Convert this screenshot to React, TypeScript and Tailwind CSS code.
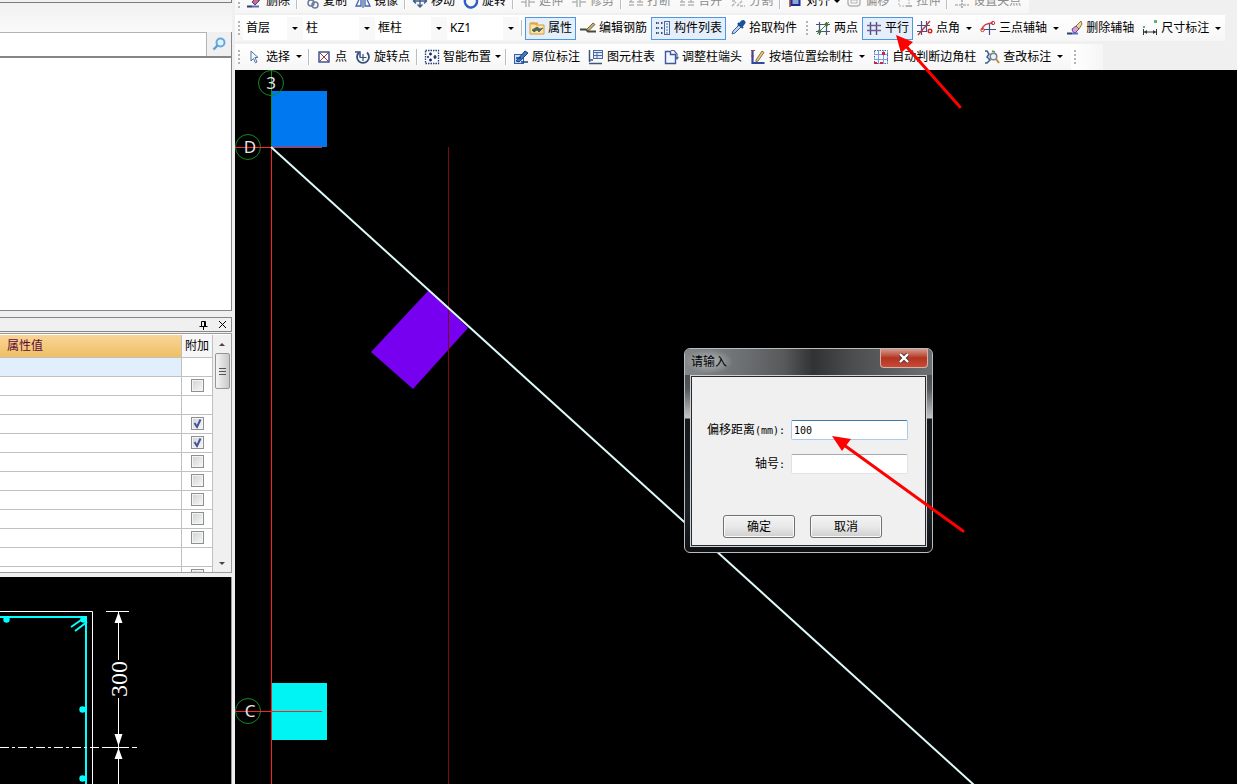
import type { ReactNode } from 'react';

const navy = '#2c3e6b';
const blue = '#3d63b5';
const gray = '#b5b5b5';

function Svg({ children }: { children: ReactNode }) {
  return (
    <svg width="16" height="16" viewBox="0 0 16 16" fill="none" className="shrink-0" aria-hidden="true">
      {children}
    </svg>
  );
}

const icons: Record<string, ReactNode> = {
  erase: (
    <Svg>
      <path d="M0 13.5h5" stroke={navy} strokeWidth="2" />
      <path d="M5 9l4-4 3 3-4 4z" fill="#c86a9c" stroke="#4b3f77" />
      <path d="M9 5l4-4 2 2-3 5z" fill="#e8c86a" stroke="#6b5b3a" />
      <path d="M5 13.5h7" stroke="#5a6fb0" strokeWidth="2" />
    </Svg>
  ),
  copy: (
    <Svg>
      <circle cx="7" cy="10" r="3" stroke="#6d7b99" strokeWidth="1.5" />
      <circle cx="11" cy="12" r="3" stroke="#6d7b99" strokeWidth="1.5" />
      <path d="M5 2v6" stroke="#6d7b99" />
    </Svg>
  ),
  mirror: (
    <Svg>
      <path d="M6 2v11H1zM10 2v11h5z" stroke={blue} strokeWidth="1.3" />
      <path d="M8 1v14" stroke={navy} />
    </Svg>
  ),
  move: (
    <Svg>
      <path d="M8 1v13M1 8h14M5.500 11.500L8 14l2.500-2.500M4 5.500L1.500 8 4 10.500M12 5.500L14.500 8 12 10.500" stroke="#3f5c8a" strokeWidth="1.4" />
    </Svg>
  ),
  rotate: (
    <Svg>
      <path d="M3 5a6 6 0 1 0 9-1" stroke="#2f5fc4" strokeWidth="2.600" />
    </Svg>
  ),
  grayBreak: (
    <Svg>
      <path d="M1 9h5M9 9h6M1 12h5M9 12h6M3 5v4M12 5v4" stroke={gray} strokeWidth="1.500" />
    </Svg>
  ),
  grayTrim: (
    <Svg>
      <path d="M1 9h5M9 9h6M6 3v11M9 3v11" stroke={gray} strokeWidth="1.500" />
    </Svg>
  ),
  graySplit: (
    <Svg>
      <path d="M2 13l4-4M7 13l5-5M2 8h3M10 13h5" stroke={gray} strokeWidth="1.500" strokeDasharray="3 1" />
    </Svg>
  ),
  align: (
    <Svg>
      <path d="M3 1v13" stroke="#a33" strokeWidth="1.500" />
      <rect x="4.500" y="6" width="8" height="6" fill="#8fa6dc" stroke="#1c2f86" strokeWidth="2" />
    </Svg>
  ),
  offset: (
    <Svg>
      <rect x="2" y="4" width="12" height="9" rx="3" stroke={gray} strokeWidth="1.500" />
      <rect x="5" y="7" width="6" height="3" stroke={gray} />
    </Svg>
  ),
  stretch: (
    <Svg>
      <rect x="2" y="4" width="10" height="9" stroke={gray} strokeDasharray="2 1" />
      <path d="M9 13h6" stroke={gray} strokeWidth="2" />
    </Svg>
  ),
  grip: (
    <Svg>
      <path d="M1 12h14" stroke={gray} strokeDasharray="3 1" strokeWidth="1.500" />
      <path d="M8 7v8" stroke={gray} strokeWidth="2" strokeDasharray="2 1" />
    </Svg>
  ),
  property: (
    <Svg>
      <path d="M1 3h5l1 2h8v9H1z" fill="#fbe3a0" stroke="#d29a3a" />
      <path d="M2 3.500h7" stroke="#e8a33c" strokeWidth="2" />
      <path d="M3 10l5-3 3 2 3-1-4 4-2-2-3 2z" fill="#4a6a55" stroke="#3a4a5a" strokeWidth=".6" />
    </Svg>
  ),
  rebar: (
    <Svg>
      <path d="M0 9.500h6l2 2h8" stroke="#3f4f3f" strokeWidth="1.800" />
      <path d="M6 10l7-7 2 1.500-6 6z" fill="#c9a86a" stroke="#5a4a30" strokeWidth=".8" />
    </Svg>
  ),
  list: (
    <Svg>
      <path d="M1 3h3M6 3h2M1 8h3M6 8h2M1 13h3M6 13h2" stroke="#39506f" strokeWidth="2" strokeDasharray="1.500 .7" />
      <rect x="9.500" y="1.500" width="5" height="13" fill="#eaf1fb" stroke="#4a6aa5" />
      <path d="M11 4h2M11 7h2M11 10h2M11 13h2" stroke="#4a6aa5" />
    </Svg>
  ),
  pick: (
    <Svg>
      <path d="M2 14l1-3 6-6 2 2-6 6z" fill="#bcd4f4" stroke="#3c5f9e" />
      <path d="M8 3l5 5M9 5l3-3.500q2-1 2.500 1L12 6z" fill="#1f5fae" stroke="#1c4f94" strokeWidth="2.200" />
    </Svg>
  ),
  twoPoint: (
    <Svg>
      <path d="M1 4.500h14M1 11.500h14M4.500 2v13M11.500 2v13" stroke="#4a5578" strokeWidth="1.200" />
      <path d="M2 14L14 2" stroke="#3a8a3a" />
      <circle cx="4.500" cy="11.500" r="1.900" fill="#3d7a44" />
      <circle cx="11.500" cy="4.500" r="1.900" fill="#3d7a44" />
    </Svg>
  ),
  parallel: (
    <Svg>
      <path d="M4.500 2v13M10.500 2v13" stroke="#46508a" strokeWidth="1.400" />
      <path d="M1 5.500h14M1 10.500h14" stroke="#7a5a8c" strokeWidth="1.400" />
    </Svg>
  ),
  pointAngle: (
    <Svg>
      <path d="M0 5.500h13M0 11.500h9M4.500 1v14M9.500 1v11" stroke="#46508a" strokeWidth="1.200" />
      <path d="M1 15L13 1" stroke="#b33" strokeWidth="1.300" />
      <circle cx="13" cy="11" r="1.800" stroke="#d22" strokeWidth="1.400" />
    </Svg>
  ),
  threePoint: (
    <Svg>
      <path d="M2 10Q3 3 13 3" stroke="#c44" strokeWidth="1.400" />
      <path d="M4 9.500h12M9.500 4v11" stroke="#46508a" strokeWidth="1.200" />
      <circle cx="13" cy="3" r="1.700" stroke="#c33" />
      <circle cx="2.500" cy="10" r="1.700" stroke="#c33" />
    </Svg>
  ),
  eraser: (
    <Svg>
      <path d="M0 13.500h5" stroke={navy} strokeWidth="2" />
      <path d="M5 13.500h6" stroke="#4d73c9" strokeWidth="2" />
      <path d="M5 9l4-3 3 3-4 4q-3-1-3-4z" fill="#dfa0d0" stroke="#5a4a94" />
      <path d="M9 6l5-5 1 3-3 5z" fill="#f0d68a" stroke="#6b5b3a" strokeWidth=".8" />
    </Svg>
  ),
  dimension: (
    <Svg>
      <rect x="1" y="6" width="2" height="2" fill="#5fb56a" />
      <rect x="12" y="0" width="3" height="3" fill="#5fb56a" />
      <path d="M1.500 9v6M14.500 9v6M2 12h12" stroke="#333" />
      <path d="M2 12l3-2v4zM14 12l-3-2v4z" fill="#333" />
    </Svg>
  ),
  pointer: (
    <Svg>
      <path d="M4 2l7 6.500H8l2 4.500-1.600.8L6.500 9.500 4 12z" fill="#f4f8ff" stroke="#53719e" />
    </Svg>
  ),
  point: (
    <Svg>
      <rect x="3" y="3" width="10" height="10" fill="#fff" stroke="#273a7c" strokeWidth="1.300" />
      <path d="M4 4l8 8M12 4l-8 8" stroke="#8a3a5c" />
      <rect x="7" y="7" width="2" height="2" fill="#c22" />
    </Svg>
  ),
  rotatePoint: (
    <Svg>
      <path d="M4 3.500a6 6 0 1 0 8 0" stroke="#33507c" strokeWidth="1.800" />
      <path d="M0 3h5v5" stroke="#33507c" strokeWidth="1.500" />
      <path d="M8 5v7M4.500 8.500h7" stroke="#33507c" strokeWidth="1.200" />
    </Svg>
  ),
  smart: (
    <Svg>
      <rect x="1.500" y="1.500" width="13" height="13" fill="#f6f9ff" stroke="#273f70" strokeWidth="1.300" strokeDasharray="1.500 1" />
      <path d="M6.500 3.500v3M5 5h3M6.500 9.500v3M5 11h3M11 6v4M9.500 8h3M3 8h2" stroke="#1c2c50" strokeWidth="1.300" />
    </Svg>
  ),
  origin: (
    <Svg>
      <rect x="1.500" y="5.500" width="9" height="9" fill="#cfe0f8" stroke="#2f5fae" />
      <path d="M3 12l9-10 3 2-9 9z" fill="#3f78c4" stroke="#1d4078" />
      <path d="M3 9h5M8 13h7" stroke="#1d4078" strokeWidth="1.400" />
    </Svg>
  ),
  columnTable: (
    <Svg>
      <path d="M1.500 1v12M1 14.500h13M1 11h4" stroke="#3d5878" strokeWidth="1.500" />
      <rect x="5.500" y="1.500" width="9" height="8" fill="#e4ecfa" stroke="#4a68a8" />
      <path d="M5 3.500h10M9 4v5M5 6.500h9" stroke="#4a68a8" />
    </Svg>
  ),
  columnEnd: (
    <Svg>
      <path d="M2.500 2.500h5v3h5v9h-10z" fill="#f2f6ff" stroke="#40589c" strokeWidth="1.400" />
      <path d="M8 1.500h3l3 3.500v5M12.500 8l1.500 2 1.500-2" stroke="#4c62a4" strokeWidth="1.200" />
    </Svg>
  ),
  wall: (
    <Svg>
      <path d="M2.500 1v13h12" stroke="#2e4aa0" strokeWidth="2.200" />
      <path d="M1 1.500h4M1 7h3" stroke="#b33" />
      <path d="M6 11l6-9 2 1.500L8 12l-2 1z" fill="#f0c878" stroke="#6b5030" strokeWidth=".8" />
    </Svg>
  ),
  corner: (
    <Svg>
      <rect x="1.500" y="1.500" width="13" height="13" fill="#f4f8ff" stroke="#3a5aa8" strokeDasharray="1.500 1" />
      <path d="M5.500 1v14M10.500 1v14M1 5.500h14M1 10.500h14" stroke="#7f9cd8" />
      <path d="M9 3h3v3H9zM1 13h3v2H1zM7 13h3v2H7z" fill="#d2233a" />
    </Svg>
  ),
  inspect: (
    <Svg>
      <path d="M1 2h2l2 3-2 3 3 3-3 3H1" stroke="#3d5f94" strokeWidth="1.500" />
      <circle cx="9.500" cy="7.500" r="3.300" fill="#e7f2ff" stroke="#7a7f88" strokeWidth="1.500" />
      <path d="M12 10l3 4" stroke="#c48a3a" strokeWidth="2" />
      <path d="M8 2l3 1" stroke="#4c9a4c" strokeWidth="1.500" />
    </Svg>
  ),
};

function Caret() {
  return <span className="block h-0 w-0 border-x-[3px] border-t-[3px] border-x-transparent border-t-black" />;
}

function Grip() {
  return (
    <span className="flex w-2 shrink-0 flex-col items-center gap-0.5">
      {[0, 1, 2, 3].map((i) => (
        <span key={i} className="h-0.5 w-0.5 bg-[#b4b4b4]" />
      ))}
    </span>
  );
}

function Separator() {
  return <span className="mx-[2px] box-content h-4 w-px shrink-0 border-r border-white bg-[#b8bcc4]" />;
}

type ToolProps = {
  icon: string;
  label: string;
  active?: boolean;
  disabled?: boolean;
  caret?: 'tight' | 'wide';
};

function Tool({ icon, label, active, disabled, caret }: ToolProps) {
  return (
    <button
      type="button"
      disabled={disabled}
      className={`flex h-[23px] shrink-0 items-center whitespace-nowrap ${
        active ? 'bg-[#e4effb] shadow-[inset_0_0_0_1px_#4a98e4]' : ''
      } ${disabled ? 'text-[#8c8c8c]' : 'text-black'}`}
    >
      <span className="flex items-center gap-[3px] px-1">
        {icons[icon]}
        {label}
      </span>
      {caret && (
        <span className={`flex items-center ${caret === 'wide' ? 'w-3 pl-0.5' : 'w-2'}`}>
          <Caret />
        </span>
      )}
    </button>
  );
}

function Picker({ name, value, className }: { name: string; value: string; className: string }) {
  return (
    <label className={`relative flex h-[23px] shrink-0 items-center ${className}`}>
      <select aria-label={name} className="h-full w-full appearance-none bg-white pl-[3px] text-xs outline-none">
        <option>{value}</option>
      </select>
      <span className="pointer-events-none absolute inset-y-0 right-0 flex items-center bg-[#f8f8f8] px-[5px]">
        <Caret />
      </span>
    </label>
  );
}

function Toolbars() {
  return (
    <header className="flex flex-col bg-[#f0f0f0]">
      <div className="flex h-[13px] items-end overflow-hidden">
        <div className="flex h-6 items-center bg-gradient-to-b from-[#fdfdfd] to-[#f6f6f6] pr-1">
          <Grip />
          <Tool icon="erase" label="删除" />
          <Separator />
          <Tool icon="copy" label="复制" />
          <Tool icon="mirror" label="镜像" />
          <Separator />
          <Tool icon="move" label="移动" />
          <Tool icon="rotate" label="旋转" />
          <Separator />
          <Tool icon="grayTrim" label="延伸" disabled />
          <Tool icon="grayTrim" label="修剪" disabled />
          <Separator />
          <Tool icon="grayBreak" label="打断" disabled />
          <Tool icon="grayBreak" label="合并" disabled />
          <Tool icon="graySplit" label="分割" disabled />
          <Separator />
          <Tool icon="align" label="对齐" caret="tight" />
          <Tool icon="offset" label="偏移" disabled />
          <Tool icon="stretch" label="拉伸" disabled />
          <Separator />
          <Tool icon="grip" label="设置夹点" disabled />
        </div>
      </div>
      <div className="flex h-[30px] items-center">
        <div className="flex h-[26px] items-center bg-gradient-to-b from-white to-[#f6f6f6] pr-0.5">
          <Grip />
          <Picker name="楼层" value="首层" className="w-15" />
          <Picker name="构件类型" value="柱" className="w-18" />
          <Picker name="类别" value="框柱" className="w-18" />
          <Picker name="构件" value="KZ1" className="w-18" />
          <Separator />
          <Tool icon="property" label="属性" active />
          <Tool icon="rebar" label="编辑钢筋" />
          <Tool icon="list" label="构件列表" active />
          <Tool icon="pick" label="拾取构件" />
        </div>
        <div className="flex h-[26px] items-center bg-gradient-to-b from-white to-[#f6f6f6]">
          <Grip />
          <Tool icon="twoPoint" label="两点" />
          <Tool icon="parallel" label="平行" active />
          <Tool icon="pointAngle" label="点角" caret="wide" />
          <Tool icon="threePoint" label="三点辅轴" caret="wide" />
          <Tool icon="eraser" label="删除辅轴" />
          <Tool icon="dimension" label="尺寸标注" caret="wide" />
        </div>
      </div>
      <div className="flex h-[27px] items-center">
        <div className="flex h-[26px] items-center bg-gradient-to-b from-white to-[#f6f6f6] pr-1">
          <Grip />
          <Tool icon="pointer" label="选择" caret="wide" />
          <Separator />
          <Tool icon="point" label="点" />
          <Tool icon="rotatePoint" label="旋转点" />
          <Separator />
          <Tool icon="smart" label="智能布置" caret="tight" />
          <Separator />
          <Tool icon="origin" label="原位标注" />
          <Tool icon="columnTable" label="图元柱表" />
          <Tool icon="columnEnd" label="调整柱端头" />
          <Tool icon="wall" label="按墙位置绘制柱" caret="wide" />
          <Tool icon="corner" label="自动判断边角柱" />
          <Tool icon="inspect" label="查改标注" caret="wide" />
        </div>
        <div className="flex h-[26px] w-8 items-center bg-gradient-to-r from-white to-[#f6f6f6]">
          <Grip />
        </div>
      </div>
    </header>
  );
}

// null = the row has no "附加" box
const rows: (boolean | null)[] = [null, false, null, true, true, false, false, false, false, false, null, false];

function PropertyTable() {
  return (
    <div className="flex h-[240px] overflow-hidden border-y border-r border-[#9a9a9a] bg-white pt-px">
      <table className="min-w-0 flex-1 table-fixed border-collapse self-start">
        <colgroup>
          <col />
          <col className="w-[31px]" />
        </colgroup>
        <thead>
          <tr className="h-[22px]">
            <th className="border-r border-b border-[#c0c0c0] bg-gradient-to-b from-[#f8d597] to-[#f0bf62] p-0 pl-[7px] text-left font-normal text-[#5c0a3c]">
              属性值
            </th>
            <th className="border-r border-b border-[#c0c0c0] bg-[#f7f7f7] p-0 font-normal whitespace-nowrap">附加</th>
          </tr>
        </thead>
        <tbody>
          {rows.map((checked, i) => (
            <tr key={i} className="h-[19px]">
              <td className={`border-r border-b border-[#c0c0c0] p-0 ${i === 0 ? 'bg-[#e1effd]' : ''}`} />
              <td className="border-r border-b border-[#c0c0c0] p-0">
                {checked !== null && <Tick checked={checked} label={`附加 ${i + 1}`} />}
              </td>
            </tr>
          ))}
        </tbody>
      </table>
      <div className="flex w-[18px] flex-col items-center bg-[#f0f0f0]">
        <button type="button" aria-label="上" className="flex h-[18px] w-full items-center justify-center">
          <span className="border-x-[3px] border-b-[3px] border-x-transparent border-b-[#444]" />
        </button>
        <div className="flex h-9 w-[15px] flex-col items-center justify-center gap-0.5 rounded-xs border border-[#959595] bg-gradient-to-r from-[#f5f5f5] to-[#c9c9c9]">
          <span className="h-px w-[7px] bg-[#555]" />
          <span className="h-px w-[7px] bg-[#555]" />
          <span className="h-px w-[7px] bg-[#555]" />
        </div>
        <button type="button" aria-label="下" className="mt-auto flex h-[18px] w-full items-center justify-center">
          <span className="border-x-[3px] border-t-[3px] border-x-transparent border-t-[#444]" />
        </button>
      </div>
    </div>
  );
}

function Tick({ checked, label }: { checked: boolean; label: string }) {
  return (
    <span className="relative mx-auto flex h-[13px] w-[13px]">
      <input
        type="checkbox"
        aria-label={label}
        defaultChecked={checked}
        className="peer h-[13px] w-[13px] appearance-none border border-[#8e8f8f] bg-gradient-to-br from-[#cfd1d4] to-[#f8f8f8] shadow-[inset_0_0_0_1px_#f4f4f4]"
      />
      <svg
        viewBox="0 0 13 13"
        fill="none"
        className="pointer-events-none absolute inset-0 hidden peer-checked:block"
        aria-hidden="true"
      >
        <path d="M3.500 6l2.500 4 3.500-7.500" stroke="#41549c" strokeWidth="2" />
      </svg>
    </span>
  );
}

function SectionPreview() {
  return (
    <svg className="h-full w-full" aria-label="截面">
      <g transform="translate(0 -577)" fill="none">
        <path d="M0 611.5H92.500V1200" stroke="#fff" />
        <path d="M0 617H86V1200" stroke="#00ffff" strokeWidth="2" />
        <path d="M71 627l13-9M75 631l12-9" stroke="#00ffff" strokeWidth="2" />
        <g fill="#00ffff">
          <circle cx="6.500" cy="619.500" r="3.200" />
          <circle cx="83.500" cy="619.500" r="3.200" />
          <circle cx="82.500" cy="709.500" r="3.200" />
          <circle cx="82.500" cy="778.500" r="3.200" />
        </g>
        <path d="M0 747.500H106" stroke="#fff" strokeDasharray="9 3 3 3" />
        <path d="M102 747.500H129M132 747.500h5M106 611.500h23M118.500 612V660M118.500 698V1200" stroke="#fff" />
        <path d="M118.500 612l-4 11h8zM118.500 746l-4-12h8zM118.500 748l-4 11h8z" fill="#fff" />
        <text
          transform="translate(127 697) rotate(-90)"
          fill="#fff"
          fontSize="24"
          fontFamily="'Liberation Serif', serif"
        >
          300
        </text>
      </g>
    </svg>
  );
}

function Sidebar() {
  return (
    <aside className="flex w-[232px] shrink-0 flex-col bg-[#f0f0f0]">
      <div className="h-[3px] shrink-0 border-r border-b border-[#7c7c7c]" />
      <div className="h-[29px] shrink-0 bg-gradient-to-b from-[#f1f1f1] to-[#fafafa]" />
      <div className="flex h-[26px] shrink-0 border-r border-b-2 border-[#85858a]">
        <input
          type="text"
          aria-label="搜索"
          className="min-w-0 flex-1 border-t border-r border-[#b4b4b4] bg-white px-1 outline-none"
        />
        <button type="button" aria-label="查找" className="flex w-6 items-center justify-center">
          <svg width="14" height="14" viewBox="0 0 14 14" fill="none" aria-hidden="true">
            <circle cx="8.500" cy="5.500" r="4" fill="#dff3fd" stroke="#62a9dc" strokeWidth="2" />
            <path d="M5.500 8.500L1.500 12.500" stroke="#5a9fd6" strokeWidth="2.400" />
          </svg>
        </button>
      </div>
      <div className="h-[253px] shrink-0 border-r border-b border-[#85858a] bg-white" />
      <div className="mt-[6px] mb-px flex h-[15px] shrink-0 items-center justify-end gap-2.5 border border-l-0 border-[#85858a] pr-1">
        <svg width="9" height="10" viewBox="0 0 9 10" fill="none" aria-hidden="true">
          <path d="M2.500 6V1.500h4V6M0.500 6.500h8M4.500 7v3M5.500 1v5" stroke="#000" />
        </svg>
        <button type="button" aria-label="关闭">
          <svg width="9" height="9" viewBox="0 0 9 9" aria-hidden="true">
            <path d="M1 1l7 7M8 1L1 8" stroke="#000" />
          </svg>
        </button>
      </div>
      <PropertyTable />
      <div className="mt-[4px] min-h-0 flex-1 border-r border-[#9a9a9a] bg-black">
        <SectionPreview />
      </div>
    </aside>
  );
}

function Drawing() {
  return (
    <svg className="absolute inset-0 h-full w-full" aria-label="绘图区">
      <g transform="translate(-235 -70)" fill="none">
        <path d="M272 91h55v56h-55z" fill="#0078f0" />
        <path d="M272 683h55v57h-55z" fill="#00f4f4" />
        <path d="M429 290l39 38-55 61-42-37z" fill="#7800f0" />
        <path d="M448.500 147V1600" stroke="#7a0c10" />
        <g stroke="#128a22">
          <circle cx="271" cy="83" r="12.500" />
          <circle cx="248" cy="147" r="12.500" />
          <circle cx="248" cy="711" r="12.500" />
          <path d="M271.500 70V147" />
        </g>
        <path d="M235 147.500H322" stroke="#ff2020" />
        <path d="M235 711.500H322" stroke="#ff2020" />
        <path d="M271.500 148V1600" stroke="#ff2020" />
        <path d="M271 147L1171 963.700" stroke="#dcfafa" strokeWidth="2" />
        <g fill="#e4e4e4" fontSize="17" textAnchor="middle" fontFamily="'Noto Sans', sans-serif">
          <text x="271" y="89">3</text>
          <text x="250" y="153">D</text>
          <text x="250" y="717">C</text>
        </g>
      </g>
    </svg>
  );
}

function InputDialog() {
  const field =
    'h-5 w-full rounded-xs border bg-white px-[2px] font-["DejaVu_Sans_Mono",monospace] text-[10px] outline-none';
  const button =
    'h-[23px] w-18 rounded-[3px] border border-[#707070] bg-gradient-to-b from-[#f3f3f3] via-[#e9e9e9] to-[#cfcfcf] shadow-[inset_0_0_0_1px_#fafafa]';
  return (
    <form
      role="dialog"
      aria-labelledby="dialog-title"
      className="absolute top-[278px] left-[449px] w-[249px] rounded-md border border-[#b9bdc0] bg-[linear-gradient(#5f6367_0,#4a4d50_27px,#55585b_40px,#c4c6c8_69px,#15181b_70px,#1d2328_160px,#0e1114)] px-[5px] pb-[5px]"
    >
      <div className="-mx-[5px] flex h-[26px] items-start justify-between rounded-t-md bg-[linear-gradient(90deg,#83878a,#6b6e70_25%,#57595a_40%,#303233_52%,#4b4d4e_68%,#6d7072)] pr-1">
        <h2
          id="dialog-title"
          className="rounded-full bg-[radial-gradient(closest-side,#b5b8ba,transparent)] px-[6px] leading-[25px] text-black"
        >
          请输入
        </h2>
        <button
          type="button"
          aria-label="关闭"
          className="flex h-[19px] w-[48px] items-center justify-center rounded-b-[4px] border border-t-0 border-[#d8b0a8] bg-gradient-to-b from-[#d9998c] via-[#b23320] via-50% to-[#c84a36]"
        >
          <svg width="12" height="10" viewBox="0 0 12 10" aria-hidden="true">
            <path d="M2 1l8 8M10 1L2 9" stroke="#4f3436" strokeWidth="4" />
            <path d="M2 1l8 8M10 1L2 9" stroke="#fff" strokeWidth="2.400" />
          </svg>
        </button>
      </div>
      <div className="border border-[#cfd2d4] bg-[#f0f0f0] pt-[44px] pr-[18px] pb-[8px] shadow-[inset_0_0_0_1px_#2a2a2a]">
        <div className="grid grid-cols-[94px_1fr] items-center gap-x-[6px] gap-y-[14px]">
          <label htmlFor="distance" className="text-right whitespace-nowrap">
            偏移距离<span className="font-['DejaVu_Sans_Mono',monospace] text-[10px]">(mm):</span>
          </label>
          <input id="distance" type="text" defaultValue="100" className={`${field} border-[#a9cbe9] border-t-[#3d7bad]`} />
          <label htmlFor="axis" className="text-right whitespace-nowrap">
            轴号<span className="font-['DejaVu_Sans_Mono',monospace] text-[10px]">:</span>
          </label>
          <input id="axis" type="text" className={`${field} border-[#dfe3e8] border-t-[#a4a8b0]`} />
        </div>
        <div className="mt-[41px] flex gap-[15px] pl-8">
          <button type="submit" className={button}>
            确定
          </button>
          <button type="button" className={button}>
            取消
          </button>
        </div>
      </div>
    </form>
  );
}

function Arrows() {
  return (
    <svg className="pointer-events-none absolute inset-0 h-full w-full" aria-hidden="true">
      <g stroke="#ff0000" strokeWidth="3" strokeLinecap="round">
        <path d="M905 45L960 107" />
        <path d="M844 445L963 531" />
      </g>
      <path d="M896 35l5 18 12-11zM832 436l10 15 9-12z" fill="#ff0000" />
    </svg>
  );
}

export default function App() {
  return (
    <div className="relative flex h-screen gap-[3px] overflow-hidden bg-[#f0f0f0] font-['Noto_Sans','Noto_Sans_CJK_SC',sans-serif] text-xs leading-4 text-black">
      <Sidebar />
      <main className="flex min-w-0 flex-1 flex-col">
        <Toolbars />
        <section className="relative min-h-0 flex-1 overflow-hidden bg-black">
          <Drawing />
          <InputDialog />
        </section>
      </main>
      <Arrows />
    </div>
  );
}
